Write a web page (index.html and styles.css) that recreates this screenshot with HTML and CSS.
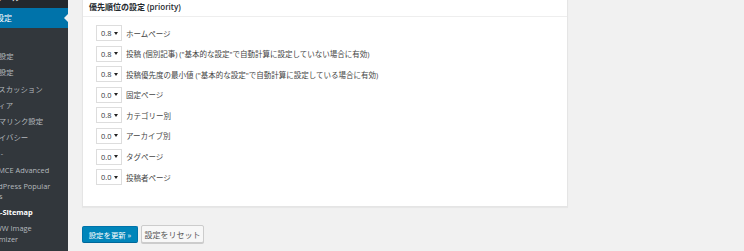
FILE: index.html
```html
<!doctype html>
<html lang="ja">
  <head>
    <meta charset="utf-8">
    <title>XML-Sitemap 設定</title>
    <link rel="stylesheet" href="styles.css">
  </head>
  <body>
    <div class="wrap">
      <nav class="adminmenu">
        <ul class="menu">
          <li class="menu-top">ツール</li>
          <li class="menu-top current">設定<span class="arrow"></span></li>
          <li class="submenu-wrap">
            <ul class="submenu">
              <li>一般</li>
              <li>投稿設定</li>
              <li>表示設定</li>
              <li>ディスカッション</li>
              <li>メディア</li>
              <li>パーマリンク設定</li>
              <li>プライバシー</li>
              <li>一覧 -</li>
              <li>TinyMCE Advanced</li>
              <li>WordPress Popular Posts</li>
              <li class="sub-current">XML-Sitemap</li>
              <li>EWWW Image Optimizer</li>
            </ul>
          </li>
        </ul>
      </nav>

      <main class="content">
        <div class="postbox">
          <h3 class="postbox-title">優先順位の設定 (priority)</h3>
          <div class="inside">
            <div class="priority-row">
              <span class="select">0.8<svg class="caret" width="4" height="3" viewBox="0 0 4 3"><path d="M0 0H4L2 3Z"/></svg></span>
              <label>ホームページ</label>
            </div>
            <div class="priority-row">
              <span class="select">0.8<svg class="caret" width="4" height="3" viewBox="0 0 4 3"><path d="M0 0H4L2 3Z"/></svg></span>
              <label>投稿 (個別記事) ("基本的な設定"で自動計算に設定していない場合に有効)</label>
            </div>
            <div class="priority-row">
              <span class="select">0.8<svg class="caret" width="4" height="3" viewBox="0 0 4 3"><path d="M0 0H4L2 3Z"/></svg></span>
              <label>投稿優先度の最小値 ("基本的な設定"で自動計算に設定している場合に有効)</label>
            </div>
            <div class="priority-row">
              <span class="select">0.0<svg class="caret" width="4" height="3" viewBox="0 0 4 3"><path d="M0 0H4L2 3Z"/></svg></span>
              <label>固定ページ</label>
            </div>
            <div class="priority-row">
              <span class="select">0.8<svg class="caret" width="4" height="3" viewBox="0 0 4 3"><path d="M0 0H4L2 3Z"/></svg></span>
              <label>カテゴリー別</label>
            </div>
            <div class="priority-row">
              <span class="select">0.0<svg class="caret" width="4" height="3" viewBox="0 0 4 3"><path d="M0 0H4L2 3Z"/></svg></span>
              <label>アーカイブ別</label>
            </div>
            <div class="priority-row">
              <span class="select">0.0<svg class="caret" width="4" height="3" viewBox="0 0 4 3"><path d="M0 0H4L2 3Z"/></svg></span>
              <label>タグページ</label>
            </div>
            <div class="priority-row">
              <span class="select">0.0<svg class="caret" width="4" height="3" viewBox="0 0 4 3"><path d="M0 0H4L2 3Z"/></svg></span>
              <label>投稿者ページ</label>
            </div>
          </div>
        </div>

        <div class="submit">
          <button class="button-primary">設定を更新 »</button>
          <button class="button-secondary">設定をリセット</button>
        </div>
      </main>
    </div>
  </body>
</html>
```

FILE: styles.css
```css
*, *::before, *::after {
    box-sizing: border-box;
}

body {
    margin: 0;
    background: #f1f1f1;
    font-family: "Open Sans", "Noto Sans CJK JP", sans-serif;
    color: #444;
    overflow: hidden;
}

.wrap {
    display: flex;
    height: 251px;
}

/* admin sidebar, cropped on the left */
.adminmenu {
    width: 68px;
    flex: none;
    background: #32373c;
    overflow: hidden;
}

.menu {
    list-style: none;
    margin: -12px 0 0 -20px;
    padding: 0;
}

.menu-top {
    position: relative;
    height: 20px;
    padding: 4px 0 4px 16px;
    font-size: 8px;
    line-height: 12px;
    color: #eee;
    background: #23282d;
    white-space: nowrap;
}

.menu-top.current {
    background: #0073aa;
    color: #fff;
}

.arrow {
    position: absolute;
    right: 0;
    top: 6px;
    border: 4px solid transparent;
    border-right-color: #f1f1f1;
}

.submenu {
    list-style: none;
    margin: 0;
    padding: 4px 0 0;
}

.submenu li {
    padding: 3px 0 3px 4px;
    font-size: 7.4px;
    line-height: 10.2px;
    color: #b4b9be;
    width: 80px;
}

.submenu li.sub-current {
    color: #fff;
    font-weight: 700;
}

/* main content */
.content {
    flex: 1;
    padding-left: 14px;
}

.postbox {
    width: 486px;
    margin-top: -4px;
    background: #fff;
    border: 1px solid #e5e5e5;
    box-shadow: 0 1px 1px rgba(0, 0, 0, .04);
}

.postbox-title {
    margin: 0;
    padding: 5px 6px 4px;
    font-size: 8px;
    line-height: 10px;
    font-weight: 600;
    color: #23282d;
    border-bottom: 1px solid #eee;
}

.inside {
    display: flex;
    flex-direction: column;
    gap: 4.6px;
    padding: 8px 13px 21px;
}

.priority-row {
    display: flex;
    align-items: center;
    gap: 4px;
    height: 16px;
}

.select {
    display: flex;
    align-items: center;
    justify-content: space-between;
    width: 26px;
    height: 16px;
    padding: 0 3px 0 4px;
    border: 1px solid #ddd;
    font-size: 7.4px;
    color: #32373c;
    background: #fff;
}

.caret {
    fill: #222;
}

.priority-row label {
    font-size: 7.5px;
    color: #444;
    white-space: nowrap;
}

.submit {
    display: flex;
    align-items: flex-end;
    gap: 3px;
    margin-top: 18px;
}

.submit button {
    font-family: inherit;
    margin: 0;
    border-radius: 2px;
    cursor: pointer;
}

.button-primary {
    height: 17px;
    width: 56px;
    padding: 0;
    background: #0085ba;
    border: 1px solid #0073aa;
    border-bottom-color: #006799;
    color: #fff;
    font-size: 7.4px;
}

.button-secondary {
    height: 18px;
    width: 63px;
    padding: 0;
    background: #f7f7f7;
    border: 1px solid #ccc;
    box-shadow: 0 1px 0 #ccc;
    color: #555;
    font-size: 8px;
}
```
